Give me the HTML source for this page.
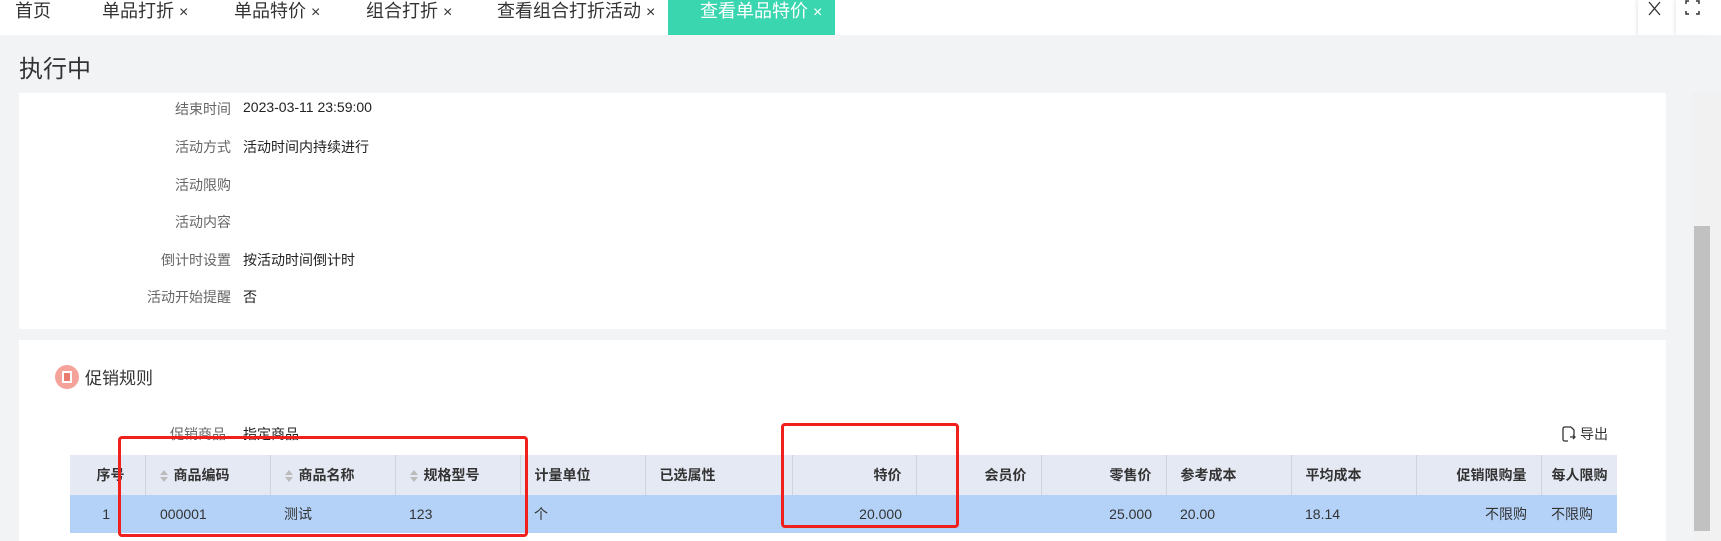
<!DOCTYPE html>
<html><head><meta charset="utf-8"><style>
*{margin:0;padding:0;box-sizing:border-box}
body{width:1721px;height:541px;overflow:hidden;background:#f2f3f5;font-family:"Liberation Sans","Noto Sans CJK SC",sans-serif;color:#333;position:relative}
.abs{position:absolute;white-space:nowrap}
.tabs{position:absolute;left:0;top:0;width:1721px;height:35px;background:#fff}
.tab{position:absolute;top:0;height:35px;line-height:22px;font-size:18px;color:#333}
.card{position:absolute;background:#fff;left:19px;width:1647px}
.lbl{position:absolute;width:231px;text-align:right;font-size:14px;color:#666}
.val{position:absolute;left:243px;font-size:14px;color:#222}
table{position:absolute;left:70px;top:455px;border-collapse:collapse;table-layout:fixed;font-size:14px}
th{background:#e5e9f3;height:40px;font-weight:bold;color:#333;border-right:1px solid #d0d4dc;padding:0 14px;text-align:left}
td{background:#b4d2f7;height:38px;padding:0 14px;color:#333}
.r{text-align:right}
.sort{display:inline-block;width:8px;margin-right:6px;vertical-align:middle}
</style></head><body>
<div class="tabs">
<div class="tab" style="left:15px">首页</div>
<div class="tab" style="left:102px">单品打折 <span style="font-size:16px">×</span></div>
<div class="tab" style="left:234px">单品特价 <span style="font-size:16px">×</span></div>
<div class="tab" style="left:366px">组合打折 <span style="font-size:16px">×</span></div>
<div class="tab" style="left:497px">查看组合打折活动 <span style="font-size:16px">×</span></div>
<div class="tab" style="left:668px;width:167px;background:#3ad6b0;color:#fff;padding-left:32px">查看单品特价 <span style="font-size:16px">×</span></div>
<div class="tab" style="left:1638px;width:33px;box-shadow:-2px 0 3px #eee">
<svg width="33" height="30" viewBox="0 0 33 30"><path d="M11 2L22 15M22 2L11 15" fill="none" stroke="#333" stroke-width="1.3"/></svg></div>
<div class="tab" style="left:1676px;width:33px;box-shadow:-2px 0 3px #eee">
<svg width="33" height="30" viewBox="0 0 33 30"><path d="M10 4v-3h3M20 1h3v3M23 11v3h-3M13 14h-3v-3" fill="none" stroke="#333" stroke-width="1.5"/></svg></div>
</div>
<div class="abs" style="left:19px;top:49px;font-size:24px;color:#333">执行中</div>
<div class="card" style="top:93px;height:236px">
<div class="lbl" style="top:6px;left:-19px">结束时间</div><div class="val" style="top:6px;left:224px">2023-03-11 23:59:00</div>
<div class="lbl" style="top:44px;left:-19px">活动方式</div><div class="val" style="top:44px;left:224px">活动时间内持续进行</div>
<div class="lbl" style="top:82px;left:-19px">活动限购</div>
<div class="lbl" style="top:119px;left:-19px">活动内容</div>
<div class="lbl" style="top:157px;left:-19px">倒计时设置</div><div class="val" style="top:157px;left:224px">按活动时间倒计时</div>
<div class="lbl" style="top:194px;left:-19px">活动开始提醒</div><div class="val" style="top:194px;left:224px">否</div>
</div>
<div class="card" style="top:340px;height:201px"></div>
<div class="abs" style="left:55px;top:365px;width:24px;height:24px;border-radius:12px;background:#f5a29a"><div style="position:absolute;left:7px;top:6px;width:10px;height:12px;border:2px solid #fff;background:#e97a70"></div></div>
<div class="abs" style="left:85px;top:364px;font-size:17px;color:#333">促销规则</div>
<div class="abs" style="left:170px;top:424px;font-size:14px;color:#666">促销商品</div>
<div class="abs" style="left:243px;top:424px;font-size:14px;color:#222">指定商品</div>
<div class="abs" style="left:1562px;top:424px;font-size:14px;color:#333"><svg width="14" height="16" viewBox="0 0 14 16" style="vertical-align:-3px;margin-right:4px"><path d="M9 1H3Q1 1 1 3v10q0 2 2 2h3M9 1l3 3v5M8 11h5M11 9l2 2-2 2" fill="none" stroke="#333" stroke-width="1.3"/></svg>导出</div>
<table>
<colgroup><col style="width:75px"><col style="width:125px"><col style="width:125px"><col style="width:125px"><col style="width:125px"><col style="width:147px"><col style="width:124px"><col style="width:125px"><col style="width:125px"><col style="width:125px"><col style="width:125px"><col style="width:125px"><col style="width:76px"></colgroup>
<tr><th class="r" style="padding-right:20px">序号</th>
<th><svg class="sort" width="8" height="14"><path d="M4 1L8 6H0zM4 13L8 8H0z" fill="#bbb"/></svg>商品编码</th>
<th><svg class="sort" width="8" height="14"><path d="M4 1L8 6H0zM4 13L8 8H0z" fill="#bbb"/></svg>商品名称</th>
<th><svg class="sort" width="8" height="14"><path d="M4 1L8 6H0zM4 13L8 8H0z" fill="#bbb"/></svg>规格型号</th>
<th>计量单位</th><th>已选属性</th><th class="r">特价</th><th class="r">会员价</th><th class="r">零售价</th><th>参考成本</th><th>平均成本</th><th class="r">促销限购量</th><th style="border-right:0;padding:0 0 0 10px">每人限购</th></tr>
<tr><td class="r" style="padding-right:35px">1</td><td style="padding-left:15px">000001</td><td>测试</td><td>123</td><td>个</td><td></td><td class="r">20.000</td><td></td><td class="r">25.000</td><td>20.00</td><td>18.14</td><td class="r">不限购</td><td style="padding-left:10px">不限购</td></tr>
</table>
<div class="abs" style="left:118px;top:436px;width:410px;height:101px;border:3px solid #f0201c;border-radius:4px"></div>
<div class="abs" style="left:781px;top:423px;width:178px;height:105px;border:3px solid #f0201c;border-radius:4px"></div>
<div class="abs" style="left:1692px;top:93px;width:29px;height:448px;background:#f1f1f1"></div>
<div class="abs" style="left:1694px;top:226px;width:16px;height:305px;background:#c1c1c1"></div>
</body></html>
